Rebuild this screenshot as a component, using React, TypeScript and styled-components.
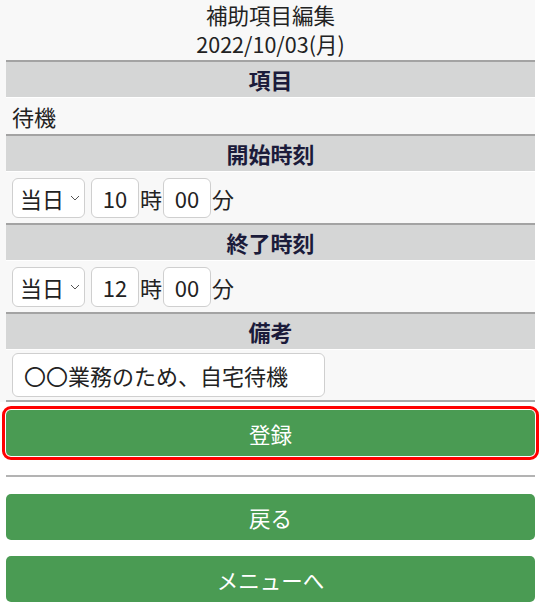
import React from "react";
import styled, { createGlobalStyle } from "styled-components";

const GlobalStyle = createGlobalStyle`
  body {
    margin: 0;
    background: #ffffff;
    font-family: "Noto Sans CJK JP", "Noto Sans", sans-serif;
    color: #222;
  }
`;

const Form = styled.div`
  width: 529px;
  padding-left: 6px;
  background: #f8f8f8;
`;

const TitleBlock = styled.div`
  text-align: center;
  font-size: 21.5px;
  line-height: 29px;
  padding-bottom: 2px;
  color: #222;
`;

const SectionHeader = styled.div`
  height: 35px;
  border-top: 2px solid #a3a3a3;
  background: #d5d6d6;
  color: #1b1b3a;
  font-weight: 700;
  font-size: 22px;
  line-height: 35px;
  text-align: center;
`;

const Row = styled.div<{ $height: number }>`
  height: ${(p) => p.$height}px;
  display: flex;
  align-items: center;
  font-size: 22px;
  padding-left: 6px;
  border-top: 1px solid #ffffff;
  box-sizing: border-box;
`;

const SelectBox = styled.div`
  width: 73px;
  height: 40px;
  box-sizing: border-box;
  border: 1px solid #cfcfcf;
  border-radius: 6px;
  background: #fff;
  display: flex;
  align-items: center;
  padding: 0 0 0 7px;
  gap: 5px;
  svg {
    flex: none;
    pointer-events: none;
  }
`;

const Select = styled.select`
  appearance: none;
  border: none;
  background: transparent;
  font-family: inherit;
  font-size: 22px;
  color: #222;
  padding: 0;
  width: 45px;
  outline: none;
`;

const NumInput = styled.input<{ $ml: number }>`
  width: 48px;
  height: 40px;
  box-sizing: border-box;
  border: 1px solid #cfcfcf;
  border-radius: 6px;
  background: #fff;
  font-family: inherit;
  font-size: 22px;
  text-align: center;
  color: #222;
  padding: 0;
  margin-left: ${(p) => p.$ml}px;
`;

const Unit = styled.span`
  margin-left: 1px;
  font-size: 22px;
  color: #222;
`;

const NoteInput = styled.input`
  width: 313px;
  height: 44px;
  box-sizing: border-box;
  border: 1px solid #cfcfcf;
  border-radius: 6px;
  background: #fff;
  font-family: inherit;
  font-size: 22px;
  color: #222;
  padding: 0 11px;
`;

const FormEnd = styled.div`
  border-top: 2px solid #a8a8a8;
`;

const Footer = styled.div`
  width: 529px;
  padding-left: 6px;
  padding-top: 8px;
`;

const GreenButton = styled.button<{ $focused?: boolean }>`
  display: block;
  width: 100%;
  height: 46px;
  border: none;
  border-radius: 5px;
  background: #4a9b53;
  color: #fff;
  font-family: inherit;
  font-size: 21.5px;
  margin-bottom: ${(p) => (p.$focused ? 19 : 16)}px;
  outline: ${(p) => (p.$focused ? "3px solid #ff0000" : "none")};
  outline-offset: 1px;
`;

const Divider = styled.hr`
  border: none;
  border-top: 2px solid #b3b3b3;
  margin: 0 0 17px 0;
`;

function Chevron() {
  return (
    <svg width="10" height="6" viewBox="0 0 10 6">
      <path d="M1 1 L5 5 L9 1" fill="none" stroke="#555" strokeWidth="1" />
    </svg>
  );
}

function TimeRow({ hour }: { hour: string }) {
  return (
    <Row $height={52}>
      <SelectBox>
        <Select defaultValue="today">
          <option value="today">当日</option>
          <option value="next">翌日</option>
        </Select>
        <Chevron />
      </SelectBox>
      <NumInput $ml={6} defaultValue={hour} />
      <Unit>時</Unit>
      <NumInput $ml={1} defaultValue="00" />
      <Unit>分</Unit>
    </Row>
  );
}

export default function App() {
  return (
    <>
      <GlobalStyle />
      <Form>
        <TitleBlock>
          <div>補助項目編集</div>
          <div>2022/10/03(月)</div>
        </TitleBlock>
        <SectionHeader>項目</SectionHeader>
        <Row $height={37}>待機</Row>
        <SectionHeader>開始時刻</SectionHeader>
        <TimeRow hour="10" />
        <SectionHeader>終了時刻</SectionHeader>
        <TimeRow hour="12" />
        <SectionHeader>備考</SectionHeader>
        <Row $height={51}>
          <NoteInput defaultValue="〇〇業務のため、自宅待機" />
        </Row>
        <FormEnd />
      </Form>
      <Footer>
        <GreenButton $focused>登録</GreenButton>
        <Divider />
        <GreenButton>戻る</GreenButton>
        <GreenButton>メニューへ</GreenButton>
      </Footer>
    </>
  );
}
